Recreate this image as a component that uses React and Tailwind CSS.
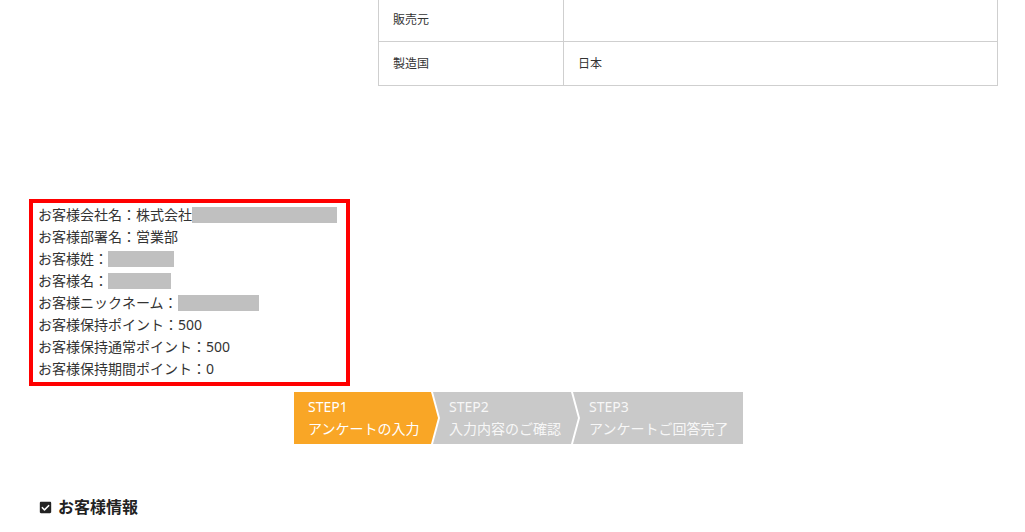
import React from 'react';
import { FaCheckSquare } from 'react-icons/fa';

const info = [
  { label: 'お客様会社名：株式会社', mask: 'w-[145px]' },
  { label: 'お客様部署名：営業部' },
  { label: 'お客様姓：', mask: 'w-[66px]' },
  { label: 'お客様名：', mask: 'w-[63px]' },
  { label: 'お客様ニックネーム：', mask: 'w-[81px]' },
  { label: 'お客様保持ポイント：500' },
  { label: 'お客様保持通常ポイント：500' },
  { label: 'お客様保持期間ポイント：0' },
];

export default function App() {
  return (
    <div
      className="bg-white text-[#333] w-[1025px] h-[532px] overflow-hidden"
      style={{ fontFamily: '"Noto Sans", "Noto Sans CJK JP", sans-serif' }}
    >
      {/* Product table (top rows cut off) */}
      <div className="ml-[378px] w-[620px] -mt-[3px]">
        <table className="w-full border-collapse text-[12px]">
          <tbody>
            <tr className="h-[44px]">
              <td className="w-[185px] border border-[#cfcfcf] pl-[14px]">販売元</td>
              <td className="border border-[#cfcfcf] pl-[14px]"></td>
            </tr>
            <tr className="h-[44px]">
              <td className="w-[185px] border border-[#cfcfcf] pl-[14px]">製造国</td>
              <td className="border border-[#cfcfcf] pl-[14px]">日本</td>
            </tr>
          </tbody>
        </table>
      </div>

      {/* Customer info box */}
      <div className="ml-[29px] mt-[113px] w-[321px] h-[187px] border-[4px] border-[#ff0000] pl-[5px] pt-[1px] text-[14px] leading-[22px]">
        {info.map((row, i) => (
          <div key={i} className="flex items-center h-[22px]">
            <span className="shrink-0">{row.label}</span>
            {row.mask && <span className={`${row.mask} shrink-0 h-[16px] bg-[#c0c0c0]`}></span>}
          </div>
        ))}
      </div>

      {/* Steps */}
      <div className="ml-[294px] mt-[6px] flex h-[52px] text-white text-[14px] leading-[22px]">
        <div className="w-[144px] bg-[#f9a626] pl-[14px] pt-[4px] [clip-path:polygon(0_0,calc(100%-7px)_0,100%_50%,calc(100%-7px)_100%,0_100%)]">
          <div>STEP1</div>
          <div>アンケートの入力</div>
        </div>
        <div className="w-[145px] -ml-[5px] bg-[#c9c9c9] pl-[16px] pt-[4px] text-[#f7f7f7] [clip-path:polygon(0_0,calc(100%-7px)_0,100%_50%,calc(100%-7px)_100%,0_100%,7px_50%)]">
          <div>STEP2</div>
          <div>入力内容のご確認</div>
        </div>
        <div className="w-[170px] -ml-[5px] bg-[#c9c9c9] pl-[16px] pt-[4px] text-[#f7f7f7] [clip-path:polygon(0_0,100%_0,100%_100%,0_100%,7px_50%)]">
          <div>STEP3</div>
          <div>アンケートご回答完了</div>
        </div>
      </div>

      {/* Section heading */}
      <div className="ml-[39px] mt-[51px] flex items-center gap-[6px] text-[16px] font-bold text-[#222]">
        <FaCheckSquare className="w-[13px] h-[13px] text-[#222]" />
        <span>お客様情報</span>
      </div>
    </div>
  );
}
